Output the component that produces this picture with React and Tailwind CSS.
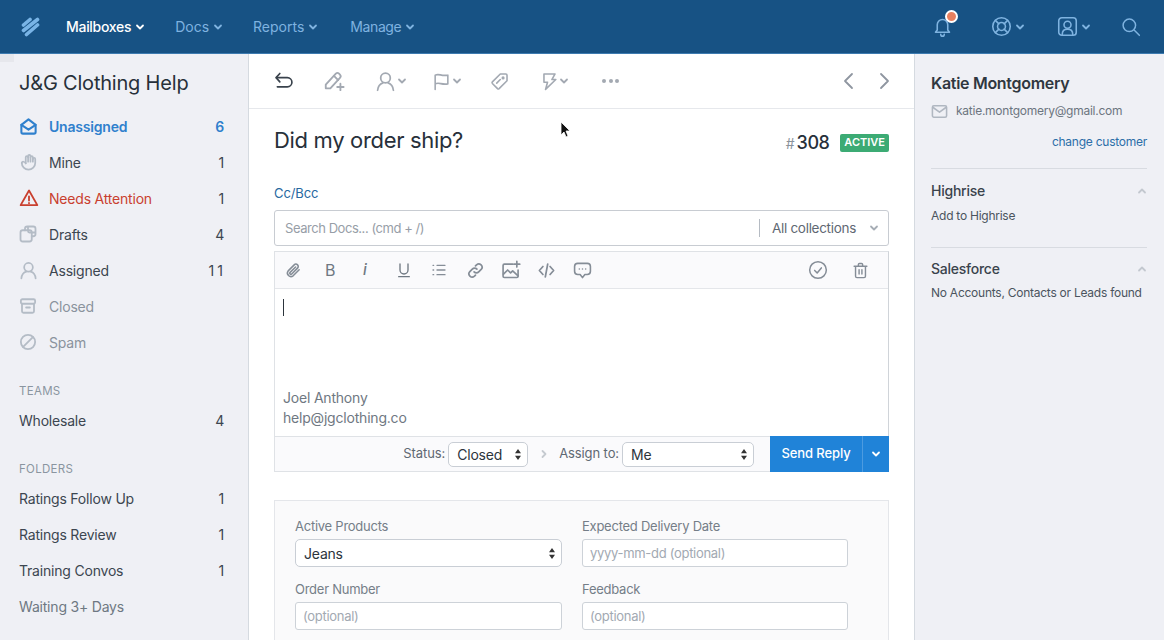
import React from "react";

const S = ({ w = 20, h = 20, vb = "0 0 24 24", sw = 2, children, className = "" }) => (
  <svg width={w} height={h} viewBox={vb} fill="none" stroke="currentColor" strokeWidth={sw} strokeLinecap="round" strokeLinejoin="round" className={className}>{children}</svg>
);
const Chev = ({ className = "", w = 10 }) => (
  <svg width={w} height={w} viewBox="0 0 10 10" fill="none" stroke="currentColor" strokeWidth="1.8" strokeLinecap="round" strokeLinejoin="round" className={className}><path d="M2 3.5 5 6.5 8 3.5" /></svg>
);
const Updown = () => (
  <svg width="8" height="13" viewBox="0 0 8 13" fill="#333"><path d="M4 1 7 5.2H1zM4 12 1 7.8h6z" /></svg>
);

const NavItem = ({ label, active, cls = "" }) => (
  <div className={`flex items-center gap-[4px] text-[14px] ${cls} ${active ? "text-white font-medium tracking-[-0.3px]" : "text-[#7fb3e0]"}`}>
    <span>{label}</span><Chev className={active ? "text-white" : "text-[#7fb3e0]"} />
  </div>
);

const Row = ({ icon, label, count, labelClass = "text-[#3c4650]", countClass = "text-[#3c4650]" }) => (
  <div className="flex items-center h-9 text-[14px] tracking-[-0.2px]">
    {icon && <span className="w-[30px] flex items-center shrink-0">{icon}</span>}
    <span className={`flex-1 ${labelClass}`}>{label}</span>
    {count && <span className={countClass}>{count}</span>}
  </div>
);

const Sec = ({ children, cls }) => <div className={`text-[11.5px] tracking-[0.3px] text-[#8a95a0] ${cls}`}>{children}</div>;

const iconCls = "text-[#b4bcc6]";
const Sidebar = () => (
  <aside className="w-[249px] shrink-0 bg-[#eff0f5] border-r border-[#d5dae0] pl-[19px] pr-[24px] relative">
    <div className="absolute left-0 top-0 w-[14px] h-[8px] bg-[#e6e7ec]" />
    <h1 className="text-[20px] leading-6 text-[#27303a] mt-[17px] mb-[13px] tracking-[-0.2px]">J&amp;G Clothing Help</h1>
    <Row label="Unassigned" count="6" labelClass="text-[#2f80cd] font-semibold" countClass="text-[#2f80cd] font-semibold"
      icon={<S w={19} h={19} className="text-[#2f80cd]" sw={2.6}><path d="M3 10v9a2 2 0 0 0 2 2h14a2 2 0 0 0 2-2v-9L12 3z" /><path d="M3 10l9 6 9-6" /></S>} />
    <Row label="Mine" count="1"
      icon={<S w={19} h={19} className={iconCls} sw={2.2}><path d="M3.500 12.500a8.500 8.500 0 0 0 17 0V7.500a1.500 1.500 0 0 0-3 0V11" /><path d="M17.500 8V5.500a1.500 1.500 0 0 0-3 0V11" /><path d="M14.500 5V4a1.500 1.500 0 0 0-3 0v7" /><path d="M11.500 5.500a1.500 1.500 0 0 0-3 0V13" /><path d="M8.500 13c-1-2-5-3-5-.5" /></S>} />
    <Row label="Needs Attention" count="1" labelClass="text-[#c9402f]"
      icon={<S w={20} h={20} className="text-[#c9402f]" sw={2.2}><path d="M12 3 2 20.500h20z" /><path d="M12 10v5M12 18v.2" /></S>} />
    <Row label="Drafts" count="4"
      icon={<S w={18} h={18} className={iconCls} sw={2.4}><rect x="2" y="7" width="15" height="15" rx="3" /><path d="M8 7V5a3 3 0 0 1 3-3h8a3 3 0 0 1 3 3v7a3 3 0 0 1-3 3h-2" /><path d="M12 2.500V8a2 2 0 0 0 2 2h7.500" /></S>} />
    <Row label="Assigned" count="11" countClass="text-[#3c4650] tracking-[3px] -mr-[2px]"
      icon={<S w={19} h={19} className={iconCls} sw={2.2}><circle cx="12" cy="8" r="5.500" /><path d="M3 22c.5-5 3-7.500 6-8.500M21 22c-.5-5-3-7.500-6-8.500" /></S>} />
    <Row label="Closed" labelClass="text-[#8a939d]"
      icon={<S w={18} h={18} className={iconCls} sw={2.4}><rect x="2.500" y="3" width="19" height="6" rx="2" /><path d="M4 9v10a2 2 0 0 0 2 2h12a2 2 0 0 0 2-2V9M9.500 14h5" /></S>} />
    <Row label="Spam" labelClass="text-[#8a939d]"
      icon={<S w={18} h={18} className={iconCls} sw={2.4}><circle cx="12" cy="12" r="9.500" /><path d="M5.500 18.500 18.500 5.500" /></S>} />
    <Sec cls="mt-[24px] mb-[4px] leading-[14px]">TEAMS</Sec>
    <Row label="Wholesale" count="4" />
    <Sec cls="mt-[24px] mb-[4px] leading-[14px]">FOLDERS</Sec>
    <Row label="Ratings Follow Up" count="1" />
    <Row label="Ratings Review" count="1" />
    <Row label="Training Convos" count="1" />
    <Row label="Waiting 3+ Days" labelClass="text-[#6e7882]" />
  </aside>
);

const tb = "text-[#a3a9b2]";
const Toolbar = () => (
  <div className="h-[55px] border-b border-[#e6e8ec] flex items-center pl-[25px] pr-[23px] shrink-0">
    <div className="w-[49px]"><S w={20} h={20} className="text-[#39424c]" sw={2}><path d="M7 3 2.500 8 7 13" /><path d="M3 8h13a5.500 5.500 0 0 1 5.500 5.500 5.500 5.500 0 0 1-5.500 5.500H4" /></S></div>
    <div className="w-[52px]"><S w={22} h={22} className={tb} sw={2}><path d="M3 16 14 4a2.500 2.500 0 0 1 3.500 0l1 1a2.500 2.500 0 0 1 0 3.500L8 20H3z" /><path d="M12 6.500 16.500 11" /><path d="M19 15v7M15.500 18.500h7" /></S></div>
    <div className="w-[57px] flex items-center gap-[1px]"><S w={21} h={21} className={tb} sw={2}><circle cx="12" cy="8" r="5.500" /><path d="M3 22c.5-5 3-7.500 6-8.500M21 22c-.5-5-3-7.500-6-8.500" /></S><Chev className={tb} /></div>
    <div className="w-[58px] flex items-center gap-[1px]"><S w={19} h={19} className={tb} sw={2}><path d="M4 22V4c5-2.500 7 1.500 16 0v11c-8 1.500-11-2.500-16 0" /></S><Chev className={tb} /></div>
    <div className="w-[50px]"><S w={19} h={19} className={tb} sw={2}><path d="M13 2.500h7a1.500 1.500 0 0 1 1.500 1.500v7L11.500 21a1.500 1.500 0 0 1-2 0L3 14.500a1.500 1.500 0 0 1 0-2z" /><path d="M8.500 14 13 9.500" /><circle cx="16.500" cy="7.500" r="1" /></S></div>
    <div className="w-[62px] flex items-center gap-[0px]"><S w={19} h={19} className={tb} sw={2}><path d="M5 2.500h14l-4 7h5L7 22l2.500-9H5z" /></S><Chev className={tb} /></div>
    <div className="flex gap-[2.5px]"><i className="w-[4px] h-[4px] rounded-full bg-[#a3a9b2]" /><i className="w-[4px] h-[4px] rounded-full bg-[#a3a9b2]" /><i className="w-[4px] h-[4px] rounded-full bg-[#a3a9b2]" /></div>
    <div className="ml-auto flex gap-[25px] text-[#8f96a0]">
      <svg width="12" height="18" viewBox="0 0 12 18" fill="none" stroke="currentColor" strokeWidth="1.800" strokeLinecap="round" strokeLinejoin="round"><path d="M10 2 3 9l7 7" /></svg>
      <svg width="12" height="18" viewBox="0 0 12 18" fill="none" stroke="currentColor" strokeWidth="1.800" strokeLinecap="round" strokeLinejoin="round"><path d="m2 2 7 7-7 7" /></svg>
    </div>
  </div>
);

const ed = "text-[#858d97]";
const EditorBar = () => (
  <div className="h-[37px] bg-[#fafafc] border-b border-[#e4e6ea] flex items-center pl-[10px] pr-[19px] shrink-0">
    <span className="w-[37px]"><S w={17} h={17} className={ed} sw={2.200}><path d="M20 11 11.500 19.500a5 5 0 0 1-7-7L13 4a3.300 3.300 0 0 1 4.700 4.700L9.500 17a1.600 1.600 0 0 1-2.300-2.300L15 7" /></S></span>
    <span className="w-[37px] text-[16px] text-[#6f7882] pl-[3px]">B</span>
    <span className="w-[36px] text-[15px] italic font-medium text-[#6f7882] pl-[4px]">i</span>
    <span className="w-[36px] pl-[1px] text-[#6f7882]"><S w={16} h={18} sw={2}><path d="M6 3v9a6 6 0 0 0 12 0V3M4 22h16" /></S></span>
    <span className="w-[36px]"><S w={16} h={16} className={ed} sw={2}><path d="M9 5h12M9 12h12M9 19h12M3 5h1M3 12h1M3 19h1" /></S></span>
    <span className="w-[34px]"><S w={17} h={17} className={ed} sw={2.400}><path d="M10 14a4.500 4.500 0 0 0 6.500 0l3.500-3.500A4.600 4.600 0 0 0 13.500 4l-1.500 1.500" /><path d="M14 10a4.500 4.500 0 0 0-6.500 0L4 13.500a4.600 4.600 0 0 0 6.500 6.500l1.500-1.500" /></S></span>
    <span className="w-[36px]"><S w={20} h={20} className={ed} sw={2}><path d="M14 5H4a1.500 1.500 0 0 0-1.500 1.500v13A1.500 1.500 0 0 0 4 21h15a1.500 1.500 0 0 0 1.500-1.500V12" /><path d="M3 17l5-5 3.500 3.500L14 13l6.500 6" /><path d="M19 1.500v7M15.500 5h7" /></S></span>
    <span className="w-[36px]"><S w={19} h={19} className={ed} sw={2.200}><path d="M7.500 7 3 12l4.500 5M16.500 7 21 12l-4.500 5M13.500 4l-3 16" /></S></span>
    <span><S w={19} h={19} className={ed} sw={2}><path d="M6 3h12a4 4 0 0 1 4 4v6a4 4 0 0 1-4 4h-3l-3 4-3-4H6a4 4 0 0 1-4-4V7a4 4 0 0 1 4-4z" /><path d="M8 10v.1M12 10v.1M16 10v.1" /></S></span>
    <span className="ml-auto mr-[24px]"><S w={20} h={20} className={ed} sw={1.800}><circle cx="12" cy="12" r="10" /><path d="m8 12.500 3 3 5-6" /></S></span>
    <span><S w={17} h={19} className={ed} sw={2}><path d="M3 6h18M9 6V3.500A1.500 1.500 0 0 1 10.500 2h3A1.500 1.500 0 0 1 15 3.500V6M5 6v14a2 2 0 0 0 2 2h10a2 2 0 0 0 2-2V6M10 11v6M14 11v6" /></S></span>
  </div>
);

const Sel = ({ v, cls }) => (
  <div className={`flex items-center justify-between bg-white border border-[#c9ced5] rounded-[5px] text-[#2c343c] tracking-[-0.2px] ${cls}`}>
    <span>{v}</span><Updown />
  </div>
);

const Field = ({ label, children }) => (
  <div>
    <div className="text-[13px] leading-4 text-[#757e88] mb-[5px] tracking-[-0.25px]">{label}</div>
    {children}
  </div>
);
const Inp = ({ ph }) => (
  <div className="h-[28px] bg-white border border-[#cdd2d8] rounded-[3px] px-[7px] pt-[1px] flex items-center text-[13px] text-[#a2a9b2] tracking-[-0.3px]">{ph}</div>
);

const Main = () => (
  <main className="w-[665px] shrink-0 bg-white flex flex-col overflow-hidden relative">
    <Toolbar />
    <div className="pl-[25px] pr-[25px]">
      <div className="flex items-start justify-between h-[76px]">
        <h2 className="text-[22px] leading-7 text-[#27303a] mt-[17px] tracking-[-0.33px]">Did my order ship?</h2>
        <div className="flex items-center mt-[20px]">
          <span className="text-[14px] text-[#8a929b] mr-[2px] mt-[2px]">#</span>
          <span className="text-[18px] font-medium text-[#27303a] mr-[11px] tracking-[-0.5px]">308</span>
          <span className="bg-[#3cab74] text-white text-[11px] font-semibold rounded-[2px] h-[18px] px-[4px] flex items-center">ACTIVE</span>
        </div>
      </div>
      <div className="text-[13px] leading-4 text-[#27689f] mb-[9px] tracking-[-0.1px]">Cc/Bcc</div>
      <div className="h-[36px] border border-[#c8ccd2] rounded-[3px] flex items-center text-[13px]">
        <span className="pl-[10px] pt-[1px] flex-1 text-[#979ea7] tracking-[-0.45px]">Search Docs... (cmd + /)</span>
        <span className="w-px h-[18px] bg-[#b5bbc3]" />
        <span className="pl-[12px] w-[109px] text-[#5f6873] text-[13.500px] tracking-[-0.3px]">All collections</span>
        <Chev className="text-[#a6adb5] mr-[9px]" />
      </div>
      <div className="mt-[5px] border border-[#dfe2e6] border-b-0 flex flex-col h-[185px] border-r-[#d0d4d9]">
        <EditorBar />
        <div className="flex-1 pl-[8px] pt-[10px] flex flex-col">
          <div className="w-px h-[17px] bg-[#2c343c]" />
          <div className="mt-auto text-[14px] leading-[20px] text-[#6f7882] pb-[8px] tracking-[-0.2px]">Joel Anthony<br />help@jgclothing.co</div>
        </div>
      </div>
      <div className="h-[36px] border border-[#dfe2e6] border-r-0 bg-[#fafafc] flex items-center justify-end text-[13px] tracking-[-0.1px]">
        <span className="text-[#5f6873] mr-[3px]">Status:</span>
        <Sel v="Closed" cls="w-[80px] h-[25px] pl-[8px] pr-[5px] text-[14px]" />
        <Chev className="text-[#c5cad0] -rotate-90 ml-[11px] mr-[10px]" />
        <span className="text-[#5f6873] mr-[3px]">Assign to:</span>
        <Sel v="Me" cls="w-[132px] h-[25px] pl-[8px] pr-[5px] text-[14px]" />
        <div className="ml-[16px] h-[36px] -my-px w-[119px] bg-[#2083d8] flex text-white text-[13px] font-medium">
          <span className="w-[93px] flex items-center justify-center border-r border-[#4c9be0]">Send Reply</span>
          <span className="flex-1 flex items-center justify-center"><Chev /></span>
        </div>
      </div>
      <div className="mt-[28px] h-[200px] border border-[#e4e6ea] bg-[#fafafb] pl-[20px] pt-[17px]">
        <div className="grid grid-cols-[267px_266px] gap-x-[20px] gap-y-[14px]">
          <Field label="Active Products">
            <Sel v="Jeans" cls="h-[28px] pl-[8px] pr-[5px] text-[14px] w-full" />
          </Field>
          <Field label="Expected Delivery Date"><Inp ph="yyyy-mm-dd (optional)" /></Field>
          <Field label="Order Number"><Inp ph="(optional)" /></Field>
          <Field label="Feedback"><Inp ph="(optional)" /></Field>
        </div>
      </div>
    </div>
    <svg className="absolute left-[311px] top-[67px]" width="12" height="18" viewBox="0 0 12 18"><path d="M1 1v13l3-3 2 5 2-1-2-5h4z" fill="#111" stroke="#fff" strokeWidth="0.800" /></svg>
  </main>
);

const Right = () => (
  <aside className="flex-1 min-w-0 bg-[#eff0f5] border-l border-[#d5dae0] pl-[16px] pr-[17px] tracking-[-0.25px]">
    <div className="text-[16px] leading-5 font-semibold text-[#2f3740] mt-[19px] tracking-[-0.3px]">Katie Montgomery</div>
    <div className="flex items-center mt-[9px] text-[12px] text-[#6c757f]">
      <S w={17} h={17} className="text-[#b0b7c1] mr-[8px]" sw={2.200}><rect x="2" y="4" width="20" height="16" rx="2" /><path d="m2.500 6 9.500 7 9.500-7" /></S>
      katie.montgomery@gmail.com
    </div>
    <div className="text-right text-[12px] text-[#2c6ea8] mt-[14px] leading-4">change customer</div>
    <div className="border-t border-[#d8dbe1] mt-[18px] pt-[12px]">
      <div className="flex items-center justify-between text-[14px] leading-5 font-medium text-[#3a434c]">Highrise<Chev className="text-[#c3c8cf] rotate-180" /></div>
      <div className="text-[12px] text-[#4b545e] mt-[7px] leading-4">Add to Highrise</div>
    </div>
    <div className="border-t border-[#d8dbe1] mt-[23px] pt-[11px]">
      <div className="flex items-center justify-between text-[14px] leading-5 font-medium text-[#3a434c]">Salesforce<Chev className="text-[#c3c8cf] rotate-180" /></div>
      <div className="text-[12px] text-[#4b545e] mt-[6px] leading-4 whitespace-nowrap">No Accounts, Contacts or Leads found</div>
    </div>
  </aside>
);

export default function App() {
  const ico = "text-[#7fb3e0]";
  return (
    <div className="w-[1164px] h-[640px] overflow-hidden flex flex-col font-['Inter','Liberation_Sans',sans-serif] bg-white">
      <header className="h-[54px] shrink-0 bg-[#175284] border-b border-[#3d7bb0] flex items-center pl-[21px] pr-[23px]">
        <svg width="19" height="20" viewBox="0 0 19 20" fill="none" stroke="#79b4e6" strokeWidth="3.600" strokeLinecap="round" className="mr-[26px]">
          <path d="M2.500 8 9 2.500" />
          <path d="M2.500 13.500 16.500 2.500" />
          <path d="M5.500 17.500 16.500 8" />
        </svg>
        <div className="flex gap-[30px]">
          <NavItem label="Mailboxes" active />
          <NavItem label="Docs" />
          <NavItem label="Reports" cls="mr-[2px]" />
          <NavItem label="Manage" cls="tracking-[-0.4px]" />
        </div>
        <div className="ml-auto flex items-center">
          <div className="relative mr-[38px]">
            <S w={21} h={21} className={ico} sw={1.800}><path d="M6 16V10a6 6 0 0 1 12 0v6l2 2.500H4z" /><path d="M10 21a2 2 0 0 0 4 0" /></S>
            <span className="absolute -top-[6px] right-[-5px] w-[13px] h-[13px] rounded-full bg-[#e8805f] border-2 border-white" />
          </div>
          <div className="flex items-center gap-[3px] mr-[32px]">
            <S w={21} h={21} className={ico} sw={1.800}><circle cx="12" cy="12" r="10" /><circle cx="12" cy="12" r="4.500" /><path d="m5 5 4 4M19 5l-4 4M5 19l4-4M19 19l-4-4" /></S>
            <Chev className={ico} />
          </div>
          <div className="flex items-center gap-[3px] mr-[30px]">
            <S w={21} h={21} className={ico} sw={1.800}><rect x="2" y="2" width="20" height="20" rx="3.500" /><circle cx="12" cy="10" r="4" /><path d="M6 21c0-4 2.500-6 6-6s6 2 6 6" /></S>
            <Chev className={ico} />
          </div>
          <S w={20} h={20} className={ico} sw={1.800}><circle cx="10" cy="10" r="7.500" /><path d="m16 16 6 6" /></S>
        </div>
      </header>
      <div className="flex flex-1 min-h-0">
        <Sidebar />
        <Main />
        <Right />
      </div>
    </div>
  );
}
